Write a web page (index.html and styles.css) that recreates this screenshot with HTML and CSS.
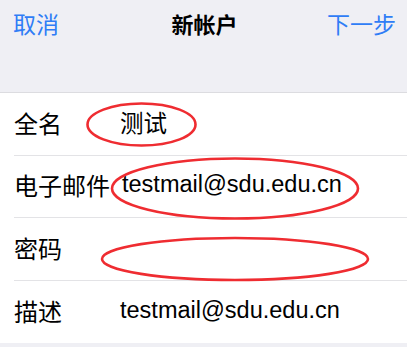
FILE: index.html
```html
<!DOCTYPE html>
<html lang="zh">
<head>
<meta charset="utf-8">
<link rel="stylesheet" href="styles.css">
</head>
<body>
<div class="page">
  <header class="header">
    <div class="navbar">
      <span class="nav-btn nav-left">取消</span>
      <span class="nav-title">新帐户</span>
      <span class="nav-btn nav-right">下一步</span>
    </div>
  </header>
  <section class="form">
    <div class="row">
      <span class="label">全名</span>
      <span class="value">测试</span>
    </div>
    <div class="row">
      <span class="label">电子邮件</span>
      <span class="value">testmail@sdu.edu.cn</span>
    </div>
    <div class="row">
      <span class="label">密码</span>
      <span class="value"></span>
    </div>
    <div class="row last">
      <span class="label">描述</span>
      <span class="value">testmail@sdu.edu.cn</span>
    </div>
  </section>
  <svg class="marks" width="407" height="347" viewBox="0 0 407 347">
    <ellipse cx="141.5" cy="124.5" rx="54" ry="21" />
    <ellipse cx="235" cy="188.5" rx="123" ry="30" />
    <ellipse cx="235" cy="259" rx="133" ry="21" />
  </svg>
</div>
</body>
</html>
```
FILE: styles.css
```css
html, body {
  margin: 0;
  padding: 0;
  background: #efeff4;
}
body {
  font-family: "Liberation Sans", "Noto Sans CJK SC", sans-serif;
  color: #000;
}
.page {
  position: relative;
  width: 407px;
  height: 347px;
  overflow: hidden;
}
.header {
  height: 93px;
  border-bottom: 1px solid #dcdce0;
  box-sizing: border-box;
}
.navbar {
  height: 45px;
  display: grid;
  grid-template-columns: 1fr auto 1fr;
  align-items: center;
  padding: 0 11px 0 13px;
  font-size: 23px;
}
.nav-btn {
  color: #2f7df6;
}
.nav-left {
  justify-self: start;
}
.nav-right {
  justify-self: end;
}
.nav-title {
  font-weight: bold;
  font-size: 22px;
}
.form {
  background: #fff;
  padding-left: 14px;
}
.row {
  height: 62.5px;
  display: flex;
  align-items: center;
  border-bottom: 1px solid #e3e3e6;
  box-sizing: border-box;
  padding-bottom: 3px;
}
.row.last {
  border-bottom: none;
}
.label {
  font-size: 24px;
  min-width: 94px;
  margin-right: 12px;
}
.value {
  font-size: 23.5px;
}
.marks {
  position: absolute;
  left: 0;
  top: 0;
  pointer-events: none;
}
.marks ellipse {
  fill: none;
  stroke: #ef2c31;
  stroke-width: 2.6;
}
```
